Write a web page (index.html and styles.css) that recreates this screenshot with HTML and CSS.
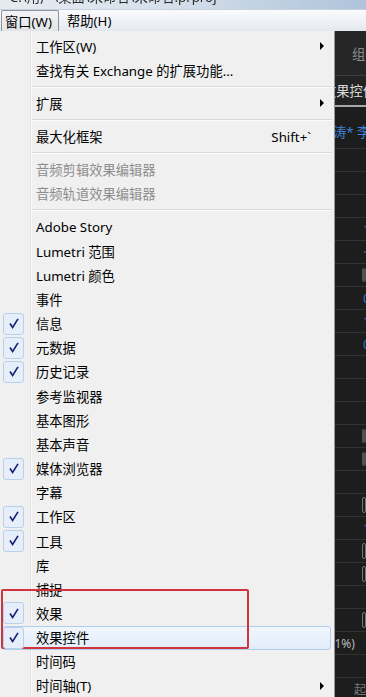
FILE: index.html
```html
<!DOCTYPE html>
<html lang="zh">
<head>
<meta charset="utf-8">
<link rel="stylesheet" href="styles.css">
</head>
<body>
<div class="titlebar"><span class="title">- C:\用户\桌面\未命名\未命名.prproj</span></div>
<div class="menubar">
  <span class="mb-item active">窗口(W)</span>
  <span class="mb-item">帮助(H)</span>
</div>
<div class="app">
  <div class="panel-head"><span class="ph-text">组件</span></div>
  <div class="tabs"><span class="tab">效果控件</span></div>
  <div class="clip-row"><span class="clip-text">涛* 李</span></div>
  <div class="drow"></div>
  <div class="drow"></div>
  <div class="drow"></div>
  <div class="drow"><span class="val">1</span></div>
  <div class="drow"><span class="val dim">·</span></div>
  <div class="drow"><span class="knob"></span></div>
  <div class="drow"><span class="val">0</span></div>
  <div class="drow"><span class="val">1</span></div>
  <div class="drow"><span class="val">0</span></div>
  <div class="drow"></div>
  <div class="drow"></div>
  <div class="drow"></div>
  <div class="drow"><span class="knob"></span></div>
  <div class="drow"><span class="knob"></span></div>
  <div class="drow"></div>
  <div class="drow"><span class="boxel"></span></div>
  <div class="drow"><span class="val">1</span></div>
  <div class="drow"><span class="boxel"></span></div>
  <div class="drow"><span class="boxel"></span></div>
  <div class="drow"></div>
  <div class="drow"><span class="boxel"></span></div>
  <div class="drow"><span class="pct">(11%)</span></div>
  <div class="drow"></div>
  <div class="drow"><span class="foot">起</span></div>
</div>

<div class="menu">
  <div class="item">工作区(W)<span class="arrow"></span></div>
  <div class="item">查找有关 Exchange 的扩展功能...</div>
  <div class="sep"></div>
  <div class="item">扩展<span class="arrow"></span></div>
  <div class="sep"></div>
  <div class="item">最大化框架<span class="shortcut">Shift+`</span></div>
  <div class="sep"></div>
  <div class="item disabled">音频剪辑效果编辑器</div>
  <div class="item disabled">音频轨道效果编辑器</div>
  <div class="sep"></div>
  <div class="item">Adobe Story</div>
  <div class="item">Lumetri 范围</div>
  <div class="item">Lumetri 颜色</div>
  <div class="item">事件</div>
  <div class="item"><span class="check"><svg width="10" height="11" viewBox="0 0 10 11"><polyline points="1,5.5 3.6,9.5 9,0.8" fill="none" stroke="#14217a" stroke-width="1.6"/></svg></span>信息</div>
  <div class="item"><span class="check"><svg width="10" height="11" viewBox="0 0 10 11"><polyline points="1,5.5 3.6,9.5 9,0.8" fill="none" stroke="#14217a" stroke-width="1.6"/></svg></span>元数据</div>
  <div class="item"><span class="check"><svg width="10" height="11" viewBox="0 0 10 11"><polyline points="1,5.5 3.6,9.5 9,0.8" fill="none" stroke="#14217a" stroke-width="1.6"/></svg></span>历史记录</div>
  <div class="item">参考监视器</div>
  <div class="item">基本图形</div>
  <div class="item">基本声音</div>
  <div class="item"><span class="check"><svg width="10" height="11" viewBox="0 0 10 11"><polyline points="1,5.5 3.6,9.5 9,0.8" fill="none" stroke="#14217a" stroke-width="1.6"/></svg></span>媒体浏览器</div>
  <div class="item">字幕</div>
  <div class="item"><span class="check"><svg width="10" height="11" viewBox="0 0 10 11"><polyline points="1,5.5 3.6,9.5 9,0.8" fill="none" stroke="#14217a" stroke-width="1.6"/></svg></span>工作区</div>
  <div class="item"><span class="check"><svg width="10" height="11" viewBox="0 0 10 11"><polyline points="1,5.5 3.6,9.5 9,0.8" fill="none" stroke="#14217a" stroke-width="1.6"/></svg></span>工具</div>
  <div class="item">库</div>
  <div class="item">捕捉</div>
  <div class="item"><span class="check"><svg width="10" height="11" viewBox="0 0 10 11"><polyline points="1,5.5 3.6,9.5 9,0.8" fill="none" stroke="#14217a" stroke-width="1.6"/></svg></span>效果</div>
  <div class="item hover"><span class="check"><svg width="10" height="11" viewBox="0 0 10 11"><polyline points="1,5.5 3.6,9.5 9,0.8" fill="none" stroke="#14217a" stroke-width="1.6"/></svg></span><span class="label">效果控件</span></div>
  <div class="item">时间码</div>
  <div class="item">时间轴(T)<span class="arrow"></span></div>
</div>

<div class="redbox"></div>
</body>
</html>
```

FILE: styles.css
```css
html, body {
  margin: 0;
  padding: 0;
}
body {
  width: 366px;
  height: 697px;
  overflow: hidden;
  position: relative;
  background: #1e1e1e;
  font-family: "Noto Sans", "Noto Sans CJK SC", sans-serif;
  font-size: 13.3px;
  color: #000;
}

.titlebar {
  height: 9px;
  overflow: hidden;
  background: linear-gradient(to right, #e6ebf1 0%, #d6e0ea 45%, #bfd0e2 75%, #aec4da 100%);
}
.title {
  display: block;
  margin-top: -12px;
  padding-left: 2px;
  line-height: 18px;
  color: #2b2b2b;
  white-space: nowrap;
  filter: blur(0.6px);
}

.menubar {
  height: 22px;
  display: flex;
  align-items: stretch;
  background: linear-gradient(#fafbfd, #e4e8ef);
  border-top: 1px solid #c7d2de;
  box-sizing: border-box;
}
.mb-item {
  display: flex;
  align-items: center;
  padding: 0 6px 0 8px;
  font-size: 13.3px;
  color: #000;
}
.mb-item.active {
  margin-left: 1px;
  width: 58px;
  box-sizing: border-box;
  padding-left: 3px;
  border: 1px solid #8f9296;
  border-bottom: none;
  border-radius: 2px 2px 0 0;
  background: linear-gradient(#f3f4f6, #e2e4e8);
}

.app {
  height: 666px;
  background: #1d1d1d;
  display: flex;
  flex-direction: column;
  color: #ccc;
}
.panel-head {
  height: 45px;
  flex: none;
  background: #262626;
  border-bottom: 1px solid #3c3c3c;
  box-sizing: border-box;
  display: flex;
  align-items: center;
}
.ph-text {
  margin-left: 352px;
  color: #8c8c8c;
  white-space: nowrap;
}
.tabs {
  height: 31px;
  flex: none;
  background: #232323;
  border-bottom: 2px solid #a8a8a8;
  box-sizing: border-box;
  display: flex;
  align-items: center;
}
.tab {
  margin-left: 323px;
  color: #d9d9d9;
  white-space: nowrap;
}
.clip-row {
  height: 41px;
  flex: none;
  display: flex;
  align-items: center;
  padding-top: 8px;
  box-sizing: border-box;
}
.clip-text {
  margin-left: 333px;
  color: #3f83d6;
  white-space: nowrap;
}
.drow {
  height: 23px;
  flex: none;
  border-top: 1px solid #333;
  box-sizing: border-box;
  display: flex;
  align-items: center;
  white-space: nowrap;
}
.val {
  margin-left: 363px;
  color: #2f6fc6;
}
.val.dim {
  color: #4a6fa0;
}
.knob {
  margin-left: 362px;
  width: 12px;
  height: 14px;
  border-radius: 4px;
  background: #505050;
}
.boxel {
  margin-left: 362px;
  width: 12px;
  height: 14px;
  border: 1px solid #777;
  border-radius: 2px;
}
.pct {
  margin-left: 324px;
  color: #b8b8b8;
  font-size: 12px;
}
.foot {
  margin-left: 354px;
  color: #777;
  font-size: 12px;
}

.menu {
  position: absolute;
  top: 31px;
  left: 0;
  width: 335px;
  height: 670px;
  box-sizing: border-box;
  background: #f0f0f0;
  border-right: 1px solid #979797;
  padding-top: 3px;
  overflow: hidden;
}
.menu::before {
  content: "";
  position: absolute;
  top: 0;
  bottom: 0;
  left: 30px;
  width: 1px;
  background: #e0e1e2;
  border-right: 1px solid #fbfbfb;
}
.item {
  position: relative;
  height: 24.17px;
  display: flex;
  align-items: center;
  padding-left: 36px;
  white-space: nowrap;
  color: #000;
}
.item.disabled {
  color: #8d8d8d;
}
.sep {
  height: 9px;
  display: flex;
  align-items: center;
  margin-left: 31px;
  margin-right: 2px;
}
.sep::after {
  content: "";
  flex: 1;
  height: 1px;
  background: #d9d9d9;
  border-bottom: 1px solid #fbfbfb;
}
.arrow {
  position: absolute;
  right: 10px;
  top: 50%;
  margin-top: -4px;
  width: 0;
  height: 0;
  border-left: 4px solid #000;
  border-top: 4px solid transparent;
  border-bottom: 4px solid transparent;
}
.shortcut {
  margin-left: auto;
  margin-right: 23px;
}
.check {
  position: absolute;
  left: 3px;
  top: 1px;
  width: 21px;
  height: 22px;
  box-sizing: border-box;
  border: 1px solid #b6d0ee;
  border-radius: 3px;
  background: #e6eef9;
  display: flex;
  align-items: center;
  justify-content: center;
  z-index: 1;
}
.item.hover::before {
  content: "";
  position: absolute;
  left: 2px;
  right: 3px;
  top: 0;
  bottom: 0;
  border: 1px solid #b3cdec;
  border-radius: 3px;
  background: linear-gradient(#f1f6fd, #e2ecf9);
}
.label {
  position: relative;
}

.redbox {
  position: absolute;
  left: 1px;
  top: 589px;
  width: 248px;
  height: 60px;
  box-sizing: border-box;
  border: 2px solid #d0353d;
  border-radius: 2px;
}
```
